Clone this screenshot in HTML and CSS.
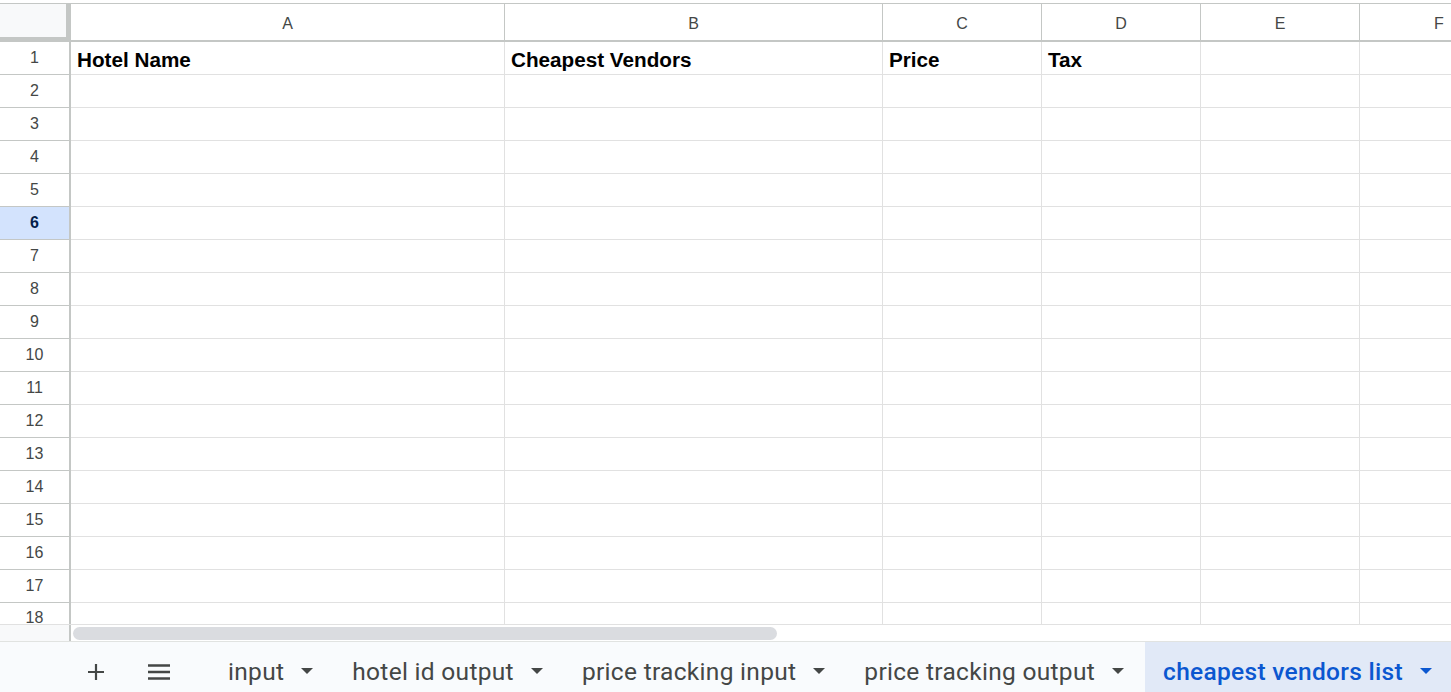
FILE: index.html
```html
<!DOCTYPE html>
<html>
<head>
<meta charset="utf-8">
<link rel="stylesheet" href="styles.css">
</head>
<body>
<div class="app">
  <div class="grid">
    <div class="row head-row">
      <div class="corner"></div>
      <div class="colhead">A</div>
      <div class="colhead">B</div>
      <div class="colhead">C</div>
      <div class="colhead">D</div>
      <div class="colhead">E</div>
      <div class="colhead">F</div>
    </div>
    <div class="row"><div class="rowhead">1</div><div class="cell bold">Hotel Name</div><div class="cell bold">Cheapest Vendors</div><div class="cell bold">Price</div><div class="cell bold">Tax</div><div class="cell"></div><div class="cell"></div></div>
    <div class="row"><div class="rowhead">2</div><div class="cell"></div><div class="cell"></div><div class="cell"></div><div class="cell"></div><div class="cell"></div><div class="cell"></div></div>
    <div class="row"><div class="rowhead">3</div><div class="cell"></div><div class="cell"></div><div class="cell"></div><div class="cell"></div><div class="cell"></div><div class="cell"></div></div>
    <div class="row"><div class="rowhead">4</div><div class="cell"></div><div class="cell"></div><div class="cell"></div><div class="cell"></div><div class="cell"></div><div class="cell"></div></div>
    <div class="row"><div class="rowhead">5</div><div class="cell"></div><div class="cell"></div><div class="cell"></div><div class="cell"></div><div class="cell"></div><div class="cell"></div></div>
    <div class="row"><div class="rowhead selected">6</div><div class="cell"></div><div class="cell"></div><div class="cell"></div><div class="cell"></div><div class="cell"></div><div class="cell"></div></div>
    <div class="row"><div class="rowhead">7</div><div class="cell"></div><div class="cell"></div><div class="cell"></div><div class="cell"></div><div class="cell"></div><div class="cell"></div></div>
    <div class="row"><div class="rowhead">8</div><div class="cell"></div><div class="cell"></div><div class="cell"></div><div class="cell"></div><div class="cell"></div><div class="cell"></div></div>
    <div class="row"><div class="rowhead">9</div><div class="cell"></div><div class="cell"></div><div class="cell"></div><div class="cell"></div><div class="cell"></div><div class="cell"></div></div>
    <div class="row"><div class="rowhead">10</div><div class="cell"></div><div class="cell"></div><div class="cell"></div><div class="cell"></div><div class="cell"></div><div class="cell"></div></div>
    <div class="row"><div class="rowhead">11</div><div class="cell"></div><div class="cell"></div><div class="cell"></div><div class="cell"></div><div class="cell"></div><div class="cell"></div></div>
    <div class="row"><div class="rowhead">12</div><div class="cell"></div><div class="cell"></div><div class="cell"></div><div class="cell"></div><div class="cell"></div><div class="cell"></div></div>
    <div class="row"><div class="rowhead">13</div><div class="cell"></div><div class="cell"></div><div class="cell"></div><div class="cell"></div><div class="cell"></div><div class="cell"></div></div>
    <div class="row"><div class="rowhead">14</div><div class="cell"></div><div class="cell"></div><div class="cell"></div><div class="cell"></div><div class="cell"></div><div class="cell"></div></div>
    <div class="row"><div class="rowhead">15</div><div class="cell"></div><div class="cell"></div><div class="cell"></div><div class="cell"></div><div class="cell"></div><div class="cell"></div></div>
    <div class="row"><div class="rowhead">16</div><div class="cell"></div><div class="cell"></div><div class="cell"></div><div class="cell"></div><div class="cell"></div><div class="cell"></div></div>
    <div class="row"><div class="rowhead">17</div><div class="cell"></div><div class="cell"></div><div class="cell"></div><div class="cell"></div><div class="cell"></div><div class="cell"></div></div>
    <div class="row"><div class="rowhead last">18</div><div class="cell"></div><div class="cell"></div><div class="cell"></div><div class="cell"></div><div class="cell"></div><div class="cell"></div></div>
  </div>
  <div class="hscroll">
    <div class="hscroll-corner"></div>
    <div class="hscroll-track"><div class="thumb"></div></div>
  </div>
  <div class="tabbar">
    <div class="tool add">
      <svg width="18" height="18" viewBox="0 0 18 18"><path d="M9 1v16M1 9h16" stroke="#444746" stroke-width="2.2" fill="none"/></svg>
    </div>
    <div class="tool menu">
      <svg width="24" height="18" viewBox="0 0 24 18"><path d="M1 2.5h22M1 9h22M1 15.5h22" stroke="#444746" stroke-width="2.6" fill="none"/></svg>
    </div>
    <div class="tabs">
      <div class="tab"><span class="tab-label">input</span><span class="caret"></span></div>
      <div class="tab"><span class="tab-label">hotel id output</span><span class="caret"></span></div>
      <div class="tab"><span class="tab-label">price tracking input</span><span class="caret"></span></div>
      <div class="tab"><span class="tab-label">price tracking output</span><span class="caret"></span></div>
      <div class="tab active"><span class="tab-label">cheapest vendors list</span><span class="caret"></span></div>
    </div>
  </div>
</div>
</body>
</html>
```
FILE: styles.css
```css
* { box-sizing: border-box; }
html, body { margin: 0; padding: 0; background: #fff; }
body { font-family: "Liberation Sans", Arial, sans-serif; overflow: hidden; }

.app {
  width: 1451px;
  height: 692px;
  display: flex;
  flex-direction: column;
  overflow: hidden;
}

.grid {
  height: 624px;
  overflow: hidden;
  padding-top: 3px;
  flex: none;
}

.row {
  display: grid;
  grid-template-columns: 71px 434px 378px 159px 159px 159px 159px;
  height: 33px;
}

.head-row {
  height: 39px;
  border-top: 1px solid #c4c7c5;
}

.corner {
  background: #f8f9fa;
  border-right: 5px solid #c4c7c5;
  border-bottom: 5px solid #c4c7c5;
}

.colhead {
  display: flex;
  align-items: center;
  justify-content: center;
  font-size: 16px;
  color: #444746;
  border-right: 1px solid #c4c7c5;
  border-bottom: 2px solid #c4c7c5;
  padding-top: 3px;
}

.rowhead {
  display: flex;
  align-items: center;
  justify-content: center;
  font-size: 16px;
  color: #444746;
  border-right: 2px solid #c4c7c5;
  border-bottom: 1px solid #c4c7c5;
  padding-bottom: 1px;
}

.rowhead.last {
  align-items: flex-start;
  padding-top: 6px;
  line-height: 18px;
}

.rowhead.selected {
  background: #d3e3fd;
  color: #041e49;
  font-weight: bold;
}

.cell {
  border-right: 1px solid #e1e1e1;
  border-bottom: 1px solid #e1e1e1;
  display: flex;
  align-items: flex-end;
  padding: 0 6px 2px;
  font-size: 20.7px;
  color: #000;
  white-space: nowrap;
  overflow: hidden;
}

.cell.bold { font-weight: bold; }

.hscroll {
  height: 17px;
  flex: none;
  display: flex;
  border-top: 1px solid #e1e1e1;
}

.hscroll-corner {
  width: 71px;
  background: #f8f9fa;
  border-right: 2px solid #c4c7c5;
}

.hscroll-track {
  flex: 1;
  padding: 2px 0 0 2px;
}

.thumb {
  width: 704px;
  height: 13px;
  border-radius: 7px;
  background: #dadce0;
}

.tabbar {
  flex: 1;
  display: flex;
  align-items: stretch;
  background: #f9fbfd;
  border-top: 1px solid #e1e3e1;
  overflow: hidden;
}

.tool {
  display: flex;
  align-items: center;
  justify-content: center;
  padding-top: 9px;
}

.add { margin-left: 87px; width: 18px; }
.menu { margin-left: 42px; width: 24px; }

.tabs {
  display: flex;
  margin-left: 39px;
  flex: none;
}

.tab {
  display: flex;
  align-items: center;
  gap: 17px;
  padding: 8px 21px 0 18px;
  font-family: Roboto, "Liberation Sans", sans-serif;
  font-size: 24.5px;
  font-weight: 400;
  letter-spacing: 0.3px;
  color: #444746;
  white-space: nowrap;
  flex: none;
}

.tab.active {
  background: #e1e9f7;
  color: #0b57d0;
  font-weight: 500;
}

.caret {
  width: 0;
  height: 0;
  border-left: 6px solid transparent;
  border-right: 6px solid transparent;
  border-top: 6px solid #444746;
}

.tab.active .caret { border-top-color: #0b57d0; }
```
